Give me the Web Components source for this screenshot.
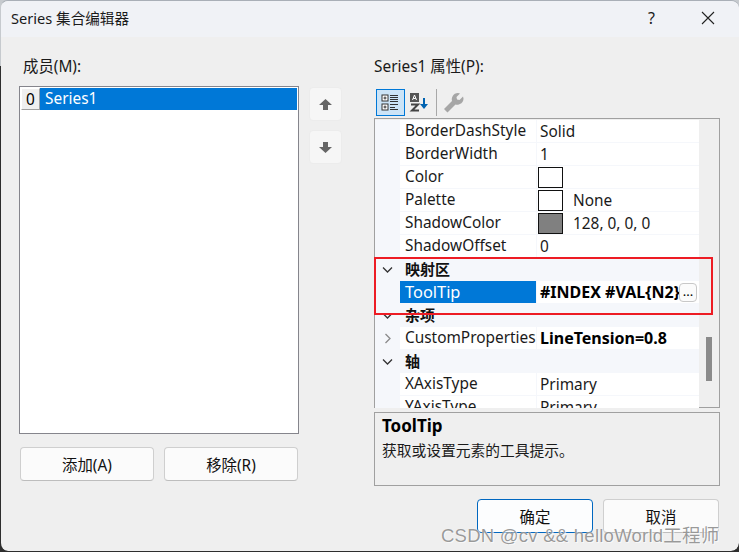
<!DOCTYPE html>
<html lang="zh">
<head>
<meta charset="UTF-8">
<title>Series 集合编辑器</title>
<style>
  html, body { margin: 0; height: 100%; background: linear-gradient(#c6cace 0 66px, #2e2e2e 66px); }
  body { font: 15.4px "Noto Sans", "Noto Sans CJK SC", sans-serif; color: #111; overflow: hidden; }
</style>
</head>
<body>
<series-dialog></series-dialog>

<script>
// small helper, every element below is the same shape
function define(name, css, html, setup) {
  customElements.define(name, class extends HTMLElement {
    constructor() {
      super();
      this.attachShadow({ mode: 'open' }).innerHTML = `<style>${css}</style>${html}`;
    }
    connectedCallback() {
      if (setup) setup.call(this, this.shadowRoot);
    }
  });
}

define('side-label', ':host{display:block;height:20px;line-height:20px;color:#1a1a1a}', '<slot></slot>');

define('push-button', `
  :host{display:flex;align-items:center;justify-content:center;box-sizing:border-box;height:34px;
    background:#fbfbfb;border:1px solid #cfcfcf;border-bottom-color:#bdbdbd;border-radius:4px;color:#111}
  :host([primary]){border-color:#0067c0;background:#fcfdfe}
  :host([icon]){width:33px;background:#f6f6f6;border-color:#ececec}
`, '<slot></slot>');

define('member-list', `
  :host{display:block;box-sizing:border-box;height:348px;background:#fff;border:1px solid #85858c;padding:1px}
  .row{display:flex;height:22px;line-height:21px}
  .idx{box-sizing:border-box;width:19px;text-align:center;background:#efefef;
    border:1px solid;border-color:#fff #a0a0a0 #a0a0a0 #fff;color:#000}
  .name{flex:1;background:#0078d7;color:#fff;padding-left:5px}
`, `<div class="row"><span class="idx">0</span><span class="name">Series1</span></div>`);

define('grid-toolbar', `
  :host{display:flex;align-items:center;height:30px;padding-left:2px;margin-top:10px}
  .b{height:27px;box-sizing:border-box;display:flex;align-items:center;justify-content:center}
  .on{width:29px;background:#cce4f7;border:1px solid #0078d7}
  .sort{width:22px;margin-left:3px}
  .sep{width:1px;height:27px;background:#a8a8a8;margin-left:6px}
  .tool{width:32px}
`, `
  <div class="b on"><svg width="19" height="19" viewBox="0 0 19 19">
    <rect x="1" y="2" width="6" height="6" fill="#fff" stroke="#333"/><path d="M2.500 5h3M4 3.500v3" stroke="#333"/>
    <rect x="1" y="11" width="6" height="6" fill="#fff" stroke="#333"/><path d="M2.500 14h3M4 12.500v3" stroke="#333"/>
    <path d="M9 2.500h8M9 4.500h8M9 6.500h8M9 8.500h8M9 11.500h8M9 14.500h5M9 16.500h8" stroke="#333"/>
  </svg></div>
  <div class="b sort"><svg width="20" height="20" viewBox="0 0 20 20">
    <rect x="1" y="1" width="9" height="9" fill="#555"/><path d="M3.500 8 5.500 3l2 5M4.200 6.500h2.600" stroke="#fff" fill="none"/>
    <path d="M2 12.500h7l-6 6h7" stroke="#444" stroke-width="2" fill="none"/>
    <path d="M15 6v9" stroke="#0063b1" stroke-width="2"/><path d="M11 12l4 5 4-5z" fill="#0063b1"/>
  </svg></div>
  <div class="sep"></div>
  <div class="b tool"><svg width="22" height="22" viewBox="0 0 22 22">
    <path d="M2 18 10 10c-1-3 1-8 6-8l2 .5-3.500 3.500.5 2.500 2.500.5 3.500-3.500.5 2c0 5-5 7-8 6l-8 8z" fill="#a6a6a6"/>
  </svg></div>
`);

define('prop-section', `
  :host{display:flex;height:23px;background:#f5f7fb;font-weight:700;line-height:23px;color:#111;font-size:15px}
  .g{width:25px;display:flex;align-items:center;justify-content:center;flex:none}
  .t{padding-left:5px}
`, `<span class="g"><svg width="11" height="11" viewBox="0 0 11 11"><path d="M1 3.500 5.500 8 10 3.500" fill="none" stroke="#333" stroke-width="1.300"/></svg></span><span class="t"><slot></slot></span>`);

define('prop-row', `
  :host{display:flex;height:23px;line-height:21px;background:#f5f7fb;color:#1a1a1a}
  .g{width:25px;flex:none;display:flex;align-items:center;justify-content:center}
  .n{width:136px;flex:none;box-sizing:border-box;height:22px;padding-left:5px;background:#fff;overflow:hidden;white-space:nowrap;margin-bottom:1px}
  .v{flex:1;margin-left:1px;height:22px;background:#fff;padding-left:3px;display:flex;align-items:center;gap:10px;position:relative;white-space:nowrap;overflow:hidden}
  :host([selected]) .n{background:#0078d7;color:#fff;font-size:16.400px}
  :host([bold]) .v{font-weight:700;color:#000;font-size:16px}
  .sw{display:none;width:23px;height:19px;border:1px solid #111;background:#fff;flex:none;margin-left:-2px}
  :host([swatch]) .sw{display:block}
  :host([swatch="gray"]) .sw{background:#808080}
  .more{display:none;position:absolute;right:2px;top:2px;width:18px;height:19px;box-sizing:border-box;border:1px solid #c8c8c8;border-radius:4px;
    background:#fbfbfb;font-size:13px;line-height:14px;text-align:center;font-weight:400}
  :host([more]) .more{display:block}
  .chev{display:none}
  :host([collapsed]) .chev{display:block}
`, `<span class="g"><svg class="chev" width="11" height="11" viewBox="0 0 11 11"><path d="M3.500 1 8 5.500 3.500 10" fill="none" stroke="#8a8a8a" stroke-width="1.300"/></svg></span><span class="n"></span><span class="v"><span class="sw"></span><span><slot></slot></span><span class="more">...</span></span>`,
  function (root) { root.querySelector('.n').textContent = this.getAttribute('name'); });

define('prop-grid', `
  :host{display:flex;box-sizing:border-box;height:290px;border:1px solid #a0a0a0;background:#efefef;position:relative}
  .view{width:324px;padding-top:1px;overflow:hidden;height:288px}
  .track{flex:1;position:relative}
  .thumb{position:absolute;left:7px;top:218px;width:6px;height:44px;background:#8a8a8a}
`, `<div class="view"><slot></slot></div><div class="track"><div class="thumb"></div></div>`);

define('desc-panel', `
  :host{display:block;box-sizing:border-box;height:74px;border:1px solid #a0a0a0;padding:1px 7px;line-height:24px}
  b{display:block;font-weight:700;color:#000;font-size:17px}
  span{color:#1a1a1a;font-size:14.750px}
`, `<b>ToolTip</b><span>获取或设置元素的工具提示。</span>`);

define('series-dialog', `
  :host{display:block;position:relative;box-sizing:border-box;width:739px;height:551px;background:#efefef;background-clip:padding-box;
    border-radius:8px;overflow:hidden;border-top:1px solid #a9afb7;border-left:1px solid transparent}
  header{display:flex;align-items:center;height:36px;box-sizing:border-box;padding:0 24px 3px 10px;background:#f0f2f6;color:#1a1a1a}
  header .t{flex:1;font-size:14.600px}
  header .h{margin-right:46px;font-size:16px}
  main{display:grid;grid-template-columns:280px 32px 346px;column-gap:10px;padding:20px 0 0 18px}
  .col{display:flex;flex-direction:column}
  .lead{padding-left:4px}
  .cmds{display:flex;gap:10px;padding:13px 0 0 1px}
  .cmds push-button{width:134px}
  .arrows{display:flex;flex-direction:column;gap:9px;padding-top:30px}
  .right{margin-left:23px;width:346px}
  .grid-wrap{position:relative;margin-top:1px}
  .stack{display:flex;flex-direction:column;gap:4px}
  .ok{display:flex;gap:10px;justify-content:flex-end;padding:13px 1px 0 0}
  .ok push-button{width:116px}
  .red{position:absolute;left:0;top:139px;width:339px;height:58px;box-sizing:border-box;border:2px solid #ed1c24;pointer-events:none}
  .mark{position:absolute;left:440px;top:520px;font:18.500px "Liberation Sans","Noto Sans CJK SC",sans-serif;letter-spacing:.25px;color:rgba(120,120,120,.75);white-space:nowrap;text-shadow:0 0 1px #fff,1px 1px 0 rgba(255,255,255,.6)}
`, `
  <header><span class="t">Series 集合编辑器</span><span class="h">?</span>
    <svg width="14" height="14" viewBox="0 0 14 14"><path d="M1 1l12 12M13 1 1 13" stroke="#222" stroke-width="1.100"/></svg></header>
  <main>
    <div class="col">
      <side-label class="lead">成员(M):</side-label>
      <div style="height:9px"></div>
      <member-list></member-list>
      <div class="cmds"><push-button>添加(A)</push-button><push-button>移除(R)</push-button></div>
    </div>
    <div class="arrows">
      <push-button icon><svg width="13" height="13" viewBox="0 0 13 13"><path d="M6.500 1 13 7H9v5H4V7H0z" fill="#666"/></svg></push-button>
      <push-button icon><svg width="13" height="13" viewBox="0 0 13 13"><path d="M6.500 12 13 6H9V1H4v5H0z" fill="#666"/></svg></push-button>
    </div>
    <div class="col right">
      <side-label>Series1 属性(P):</side-label>
      <grid-toolbar></grid-toolbar>
      <div class="grid-wrap">
        <div class="stack">
          <prop-grid>
            <prop-row name="BorderDashStyle">Solid</prop-row>
            <prop-row name="BorderWidth">1</prop-row>
            <prop-row name="Color" swatch></prop-row>
            <prop-row name="Palette" swatch>None</prop-row>
            <prop-row name="ShadowColor" swatch="gray">128, 0, 0, 0</prop-row>
            <prop-row name="ShadowOffset">0</prop-row>
            <prop-section>映射区</prop-section>
            <prop-row name="ToolTip" selected bold more>#INDEX #VAL{N2}</prop-row>
            <prop-section>杂项</prop-section>
            <prop-row name="CustomProperties" bold collapsed>LineTension=0.8</prop-row>
            <prop-section>轴</prop-section>
            <prop-row name="XAxisType">Primary</prop-row>
            <prop-row name="YAxisType">Primary</prop-row>
          </prop-grid>
          <desc-panel></desc-panel>
        </div>
        <div class="red"></div>
      </div>
      <div class="ok"><push-button primary>确定</push-button><push-button>取消</push-button></div>
    </div>
  </main>
  <div class="mark">CSDN @cv &amp;&amp; helloWorld工程师</div>
`);
</script>
</body>
</html>
